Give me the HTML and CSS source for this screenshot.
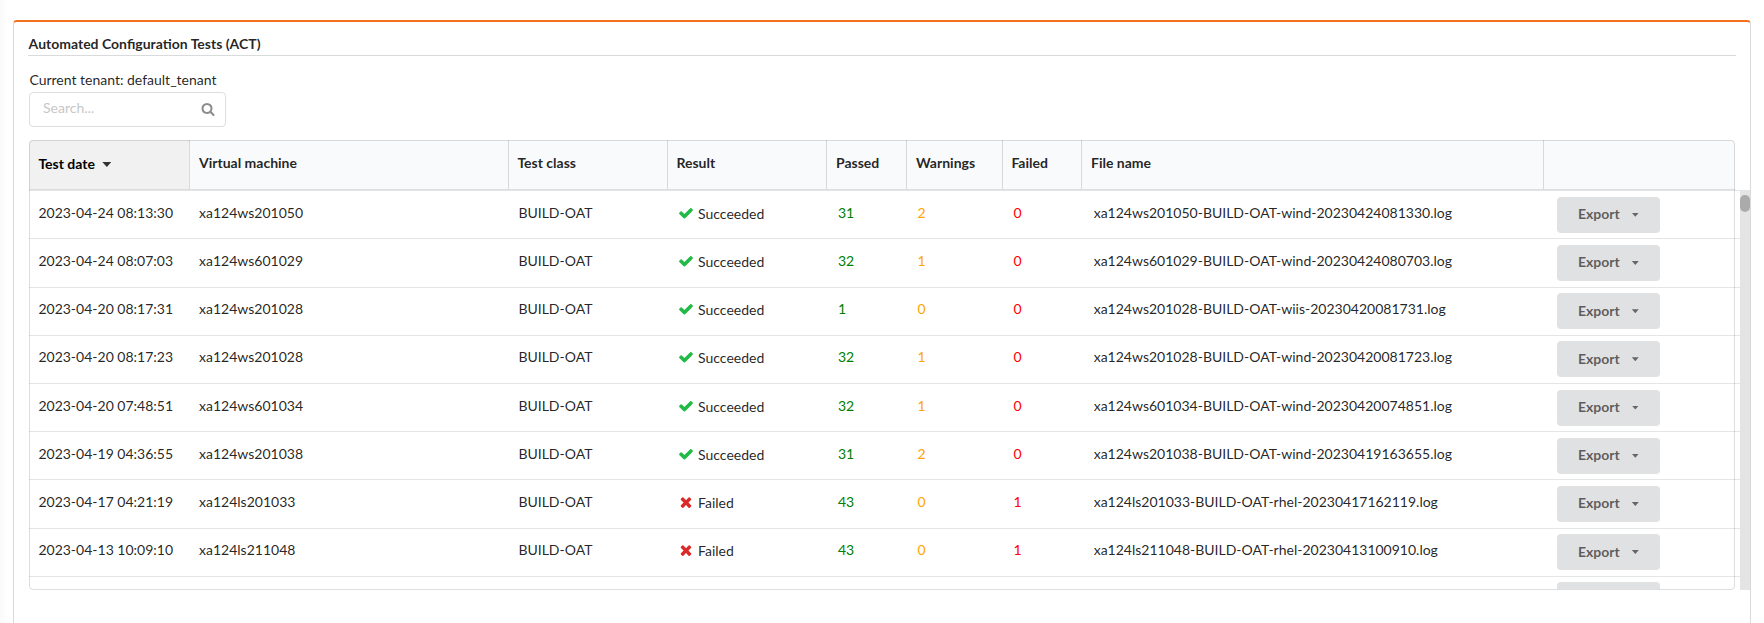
FILE: index.html
```
<!DOCTYPE html>
<html lang="en">
<head>
<meta charset="utf-8">
<title>Automated Configuration Tests</title>
<link rel="stylesheet" href="styles.css">
</head>
<body>
<main class="panel">
  <h1 class="title">Automated Configuration Tests (ACT)</h1>
  <div class="tenant">Current tenant: default_tenant</div>
  <label class="search">
    <input type="text" placeholder="Search...">
    <svg class="search-icon" viewBox="0 0 1792 1792"><path d="M1216 832q0-185-131.500-316.500t-316.500-131.500-316.500 131.500-131.500 316.500 131.500 316.500 316.500 131.500 316.500-131.500 131.500-316.500zm512 832q0 52-38 90t-90 38q-54 0-90-38l-343-342q-179 124-399 124-143 0-273.500-55.500t-225-150-150-225-55.500-273.500 55.500-273.500 150-225 225-150 273.500-55.500 273.500 55.500 225 150 150 225 55.500 273.500q0 220-124 399l343 343q37 37 37 90z"/></svg>
  </label>
  <div class="table">
    <div class="row head">
      <div class="sorted">Test date <i class="caret"></i></div><div>Virtual machine</div><div class="snug">Test class</div><div class="snug">Result</div><div>Passed</div><div>Warnings</div><div class="snug">Failed</div><div>File name</div><div></div>
    </div>
    <div class="body">
      <div class="rows" id="rows"></div>
      <div class="scrollbar"><div class="thumb"></div></div>
    </div>
  </div>
</main>
<script src="app.js"></script>
</body>
</html>
```
FILE: styles.css
```
* { box-sizing: border-box; }
body { margin: 0; height: 623px; padding: 20px 13px 0; overflow: hidden; background: linear-gradient(90deg, #fafafa, #fff 9px); font: 14px/20px Lato, sans-serif; color: rgba(0,0,0,.87); }
.panel { height: 603px; border: 1px solid #d9dadb; border-top: 2px solid #f2711c; border-bottom: 0; border-radius: 4px 4px 0 0; background: #fff; padding: 12px 0 0 14px; }
.title { margin: 0 14px 0 0; height: 22px; border-bottom: 1px solid #d9dadb; font-size: 14px; line-height: 20px; font-weight: 700; text-indent: .6px; }
.tenant { margin: 14px 0 0 1px; height: 22px; line-height: 20px; text-indent: .4px; }
.search { display: flex; align-items: center; width: 197px; height: 35px; margin-left: 1px; padding: 0 10px 2px 13px; border: 1px solid #dededf; border-radius: 4px; }
.search input { flex: 1; min-width: 0; height: 22px; border: 0; padding: 0 0 2px; outline: 0; font: inherit; background: none; }
.search input::placeholder { color: #c7c7c7; opacity: 1; }
.search-icon { width: 14px; height: 14px; fill: #8c8c8c; }
.table { position: relative; width: 1706px; height: 450px; margin: 13px 0 0 1px; }
.table::after { content: ""; position: absolute; inset: 0; border: 1px solid rgba(34,36,38,.15); border-radius: 4px; pointer-events: none; }
.row { display: grid; grid-template-columns: 161px 319px 159px 159px 80px 96px 79px 462px 191px; }
.head { height: 50px; background: #f9fafb; border-bottom: 1px solid #dcddde; border-radius: 4px 4px 0 0; font-weight: 700; overflow: hidden; }
.head > div { padding: 13px 9px; border-right: 1px solid #d8d9da; }
.head > div.snug { padding-left: 8.4px; }
.head > div:last-child { border: 0; }
.head > div.sorted { background: #f1f1f1; color: #000; padding: 14px 9.4px; }
.caret { display: inline-block; width: 9px; height: 5px; margin-left: 4px; background: #333; clip-path: polygon(0 0, 100% 0, 50% 100%); vertical-align: 2px; }
.body { display: flex; width: 1721px; height: 400px; }
.rows { flex: 1; height: 399px; padding-top: .2px; overflow: hidden; }
.rows .row { height: 48.2px; border-top: 1px solid #e4e5e5; }
.rows .row > div { padding: 11.6px 9.4px 0; white-space: nowrap; }
.rows .row > div:nth-child(2) { padding-left: 9px; }
.rows .row .result { display: flex; gap: 4px; padding: 12.6px 0 0 10px; }
.status { width: 16px; height: 16px; margin-top: 1px; }
.status.ok { fill: #21ba45; }
.status.bad { fill: #db2828; }
.rows .row .passed { color: #008000; padding-left: 11px; }
.rows .row .warn { color: #ffa500; padding-left: 10.4px; }
.rows .row .fail { color: #f00; padding-left: 10.4px; }
.rows .row .file { padding-left: 11.7px; }
.rows .row .action { padding: 5.6px 0 0 13px; }
.export { display: flex; align-items: center; width: 103px; height: 36px; padding: 0 0 2px 21px; border: 0; border-radius: 4px; background: #e0e1e2; color: rgba(0,0,0,.6); font: 700 14px Lato, sans-serif; }
.export .caret { width: 7px; height: 4px; margin: 2px 0 0 12px; background: #666; }
.scrollbar { width: 10px; background: #e4e4e4; padding-top: 5px; }
.thumb { height: 17px; border-radius: 5px; background: #ababab; }
```
FILE: app.js
```
const tests = [
  ["2023-04-24 08:13:30", "xa124ws201050", true, 31, 2, 0, "wind-20230424081330"],
  ["2023-04-24 08:07:03", "xa124ws601029", true, 32, 1, 0, "wind-20230424080703"],
  ["2023-04-20 08:17:31", "xa124ws201028", true, 1, 0, 0, "wiis-20230420081731"],
  ["2023-04-20 08:17:23", "xa124ws201028", true, 32, 1, 0, "wind-20230420081723"],
  ["2023-04-20 07:48:51", "xa124ws601034", true, 32, 1, 0, "wind-20230420074851"],
  ["2023-04-19 04:36:55", "xa124ws201038", true, 31, 2, 0, "wind-20230419163655"],
  ["2023-04-17 04:21:19", "xa124ls201033", false, 43, 0, 1, "rhel-20230417162119"],
  ["2023-04-13 10:09:10", "xa124ls211048", false, 43, 0, 1, "rhel-20230413100910"]
];
const check = '<svg class="status ok" viewBox="0 0 1792 1792"><path d="M1671 566q0 40-28 68l-724 724-136 136q-28 28-68 28t-68-28l-136-136-362-362q-28-28-28-68t28-68l136-136q28-28 68-28t68 28l294 295 656-657q28-28 68-28t68 28l136 136q28 28 28 68z"/></svg>';
const cross = '<svg class="status bad" viewBox="0 0 1792 1792"><path d="M1490 1322q0 40-28 68l-136 136q-28 28-68 28t-68-28l-294-294-294 294q-28 28-68 28t-68-28l-136-136q-28-28-28-68t28-68l294-294-294-294q-28-28-28-68t28-68l136-136q28-28 68-28t68 28l294 294 294-294q28-28 68-28t68 28l136 136q28 28 28 68t-28 68l-294 294 294 294q28 28 28 68z"/></svg>';
const action = label => `<div class="action"><button class="export">${label}<i class="caret"></i></button></div>`;
document.getElementById("rows").innerHTML = tests.map(([date, vm, ok, passed, warnings, failed, file]) => `
  <div class="row"><div>${date}</div><div>${vm}</div><div>BUILD-OAT</div>
  <div class="result">${ok ? check : cross}<span>${ok ? "Succeeded" : "Failed"}</span></div>
  <div class="passed">${passed}</div><div class="warn">${warnings}</div><div class="fail">${failed}</div>
  <div class="file">${vm}-BUILD-OAT-${file}.log</div>${action("Export")}</div>`).join("") +
  '<div class="row"><div></div><div></div><div></div><div></div><div></div><div></div><div></div><div></div>' + action("") + '</div>';
```
